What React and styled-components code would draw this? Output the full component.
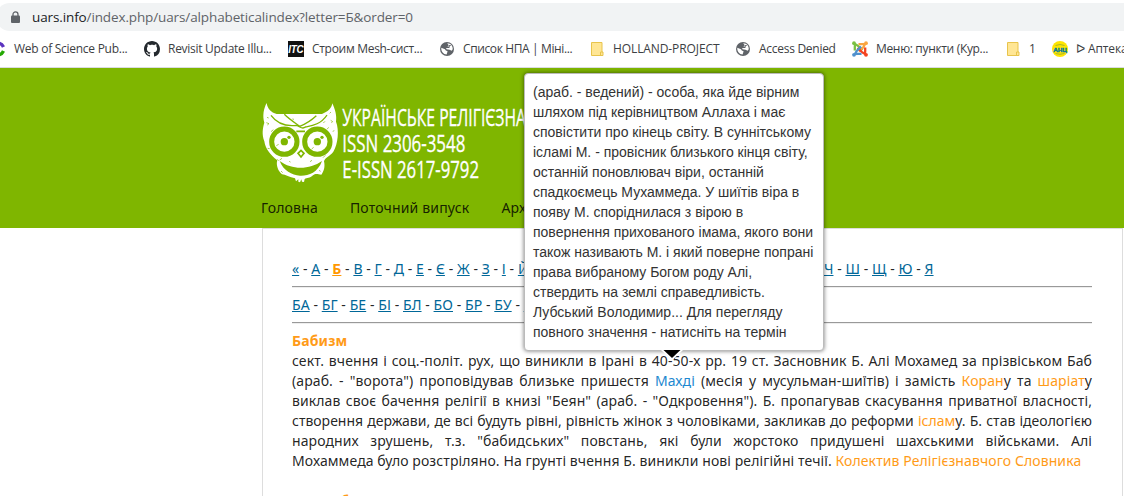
import React from "react";
import styled, { createGlobalStyle } from "styled-components";

const GlobalStyle = createGlobalStyle`
  * { box-sizing: border-box; }
  body {
    margin: 0;
    background: #fff;
    font-family: "Noto Sans", "Open Sans", sans-serif;
    font-size: 14px;
    line-height: 20px;
    color: rgba(0, 0, 0, 0.87);
  }
`;

const Page = styled.div`
  width: 1124px;
  height: 496px;
  overflow: hidden;
`;

const Browser = styled.div`
  height: 68px;
  padding-top: 3px;
  background: #fff;
  border-bottom: 1px solid #dadce0;
`;

const AddressBar = styled.div`
  display: flex;
  align-items: center;
  gap: 12px;
  height: 28px;
  margin: 0 -20px 0 -4px;
  padding-left: 15px;
  border-radius: 14px;
  background: #f1f3f4;
`;

const Url = styled.span`
  font: 13.5px/28px "Open Sans", sans-serif;
  letter-spacing: -0.12px;
  color: #5f6368;
  white-space: nowrap;
  b { font-weight: 400; color: #202124; }
`;

const Bookmarks = styled.div`
  display: flex;
  height: 36px;
  align-items: center;
  margin-left: -10px;
  width: 1300px;
`;

const Bookmark = styled.div`
  display: flex;
  flex: none;
  align-items: center;
  gap: 8px;
  width: ${(p) => p.$width}px;
  font: 12px/16px "Open Sans", sans-serif;
  letter-spacing: ${(p) => p.$track || 0}px;
  color: #3c4043;
  white-space: nowrap;
  svg { flex: none; }
`;

const Header = styled.header`
  height: 160px;
  padding: 27px 0 0 255px;
  background: #7fb600;
`;

const Logo = styled.svg`
  display: block;
`;

const Nav = styled.nav`
  display: flex;
  gap: 32px;
  margin: 8px 0 0 6px;
  letter-spacing: 0.17px;
`;

const NavItem = styled.a`
  color: rgba(0, 0, 0, 0.84);
  white-space: nowrap;
`;

const Content = styled.main`
  width: 861px;
  height: 300px;
  margin-left: 262px;
  padding: 30px 30px 0 29px;
  border: 1px solid #ddd;
  border-bottom: 0;
`;

const Letters = styled.div`
  white-space: nowrap;
  letter-spacing: ${(p) => p.$track}px;
`;

const Letter = styled.a`
  color: ${(p) => (p.$active ? "#ff9800" : "#006798")};
  font-weight: ${(p) => (p.$active ? 700 : 400)};
  text-decoration: underline;
`;

const Rule = styled.hr`
  height: 2px;
  margin: 7px 0;
  border: 0;
  border-top: 1px solid #999;
  border-bottom: 1px solid #eee;
`;

const TermTitle = styled.h2`
  margin: 0;
  font-size: 14px;
  line-height: 20px;
  font-weight: 700;
  letter-spacing: 0.15px;
  color: #ff9b18;
`;

const Article = styled.div`
  margin: 0 0 20px;
`;

const Line = styled.div`
  height: 20px;
  text-align: justify;
  text-align-last: ${(p) => (p.$last ? "left" : "justify")};
  letter-spacing: ${(p) => (p.$tight ? 0 : 0.095)}px;
`;

const Term = styled.a`
  color: ${(p) => (p.$hovered ? "#1e88d0" : "#ff9b18")};
`;

const Tooltip = styled.div`
  position: absolute;
  left: 524px;
  top: 73px;
  width: 300px;
  padding: 8px;
  border: 1px solid #bbb;
  border-radius: 4px;
  background: #fff;
  box-shadow: 0 0 4px rgba(0, 0, 0, 0.55);
  font: 14px/20px "Liberation Sans", Arial, sans-serif;
  color: #333;
  white-space: nowrap;
`;

const Arrow = styled.svg`
  position: absolute;
  left: 136px;
  top: 275px;
`;

const Lock = () => (
  <svg width="9" height="13" viewBox="0 0 9 13">
    <path d="M2 5V3.4a2.5 2.5 0 0 1 5 0V5" fill="none" stroke="#5f6368" strokeWidth="1.3" />
    <rect y="4.5" width="9" height="7.5" rx="1" fill="#5f6368" />
  </svg>
);

const Clarivate = () => (
  <svg width="16" height="16" viewBox="0 0 16 16" fill="none" strokeWidth="3.4">
    <path d="M3 5C6 1 11 1 13.500 6" stroke="#5b33bf" />
    <path d="M3 11C6 15 11 15 13.500 10" stroke="#24a803" />
  </svg>
);

const Github = () => (
  <svg width="16" height="16" viewBox="0 0 16 16" fill="#24292e">
    <path d="M8 0C3.580 0 0 3.580 0 8c0 3.540 2.290 6.530 5.470 7.590.4.070.55-.17.55-.38 0-.19-.01-.82-.01-1.490-2.010.37-2.530-.49-2.690-.94-.09-.23-.48-.94-.82-1.130-.28-.15-.68-.52-.01-.53.63-.01 1.080.58 1.230.82.72 1.210 1.870.87 2.330.66.07-.52.28-.87.51-1.070-1.780-.2-3.640-.89-3.640-3.950 0-.87.31-1.590.82-2.150-.08-.2-.36-1.020.08-2.120 0 0 .67-.21 2.200.82.64-.18 1.320-.27 2-.27s1.360.09 2 .27c1.530-1.040 2.200-.82 2.200-.82.44 1.100.16 1.920.08 2.120.51.56.82 1.270.82 2.150 0 3.070-1.870 3.750-3.650 3.950.29.25.54.73.54 1.480 0 1.070-.01 1.930-.01 2.200 0 .21.15.46.55.38A8.010 8.010 0 0 0 16 8c0-4.420-3.580-8-8-8z" />
  </svg>
);

const Itc = () => (
  <svg width="16" height="16" viewBox="0 0 16 16">
    <rect width="16" height="16" fill="#111" />
    <text x="0.300" y="12" fontFamily="Liberation Sans, sans-serif" fontSize="11" fontWeight="700" fontStyle="italic" textLength="15" lengthAdjust="spacingAndGlyphs" fill="#fff">ITC</text>
  </svg>
);

const Globe = () => (
  <svg width="16" height="16" viewBox="0 0 16 16">
    <circle cx="8" cy="8" r="7" fill="#5f6368" />
    <path d="M2.300 6.800L6 8.200 6.800 9.600 8.600 10.300 7.600 13.600C4.500 13.300 2 10.800 2.300 6.800ZM8.200 2.200C11.500 2 14 5 13.700 8.200L12.700 9.700 10.500 8.700 7.500 8.200 6.900 6.200 9.500 5.600 9.400 3.800Z" fill="#fff" />
    <path d="M7 6.500h3.200v-2h1.500" stroke="#5f6368" strokeWidth="1" fill="none" />
  </svg>
);

const Folder = () => (
  <svg width="16" height="16" viewBox="0 0 16 16">
    <path d="M2.500 1.500h10.500v9.500h1v3.500h-11.500z" fill="#ffe694" stroke="#e8c44c" />
    <path d="M11.500 14V11h2" fill="none" stroke="#e8c44c" />
  </svg>
);

const Joomla = () => (
  <svg width="16" height="16" viewBox="0 0 16 16" fill="none" strokeWidth="2.300">
    <path d="M2.800 9.500V6L3 3 6 4.800 10.500 9" stroke="#7ac143" />
    <path d="M6.500 3.200H10L13 3 11.500 6 7 10.500" stroke="#f9a541" />
    <path d="M13.200 6.500V10L13 13 10 11.200 5.500 7" stroke="#f44321" />
    <path d="M9.500 12.800H6L3 13 4.700 10 9 5.500" stroke="#5091cd" />
    <g stroke="none">
      <circle cx="2" cy="2.200" r="1.900" fill="#7ac143" />
      <circle cx="14" cy="2.200" r="1.900" fill="#f9a541" />
      <circle cx="14" cy="13.800" r="1.900" fill="#f44321" />
      <circle cx="2" cy="13.800" r="1.900" fill="#5091cd" />
    </g>
  </svg>
);

const Pharmacy = () => (
  <svg width="16" height="16" viewBox="0 0 16 16">
    <circle cx="8" cy="8" r="8" fill="#ffe500" />
    <path d="M3.500 4.500Q8 2.500 12.500 4.500M3.500 12.500Q8 14 12.500 12.500" stroke="#a6b72b" fill="none" />
    <text x="1.200" y="10.500" fontFamily="Liberation Sans, sans-serif" fontSize="6" fontWeight="700" textLength="13.500" lengthAdjust="spacingAndGlyphs" fill="#007c9d" stroke="#007c9d" strokeWidth="0.400">АНЦ</text>
  </svg>
);

const SiteLogo = () => (
  <Logo width="420" height="95" viewBox="0 0 1260 285">
    <path fill="#fff" d="M35 24C37 40 48 53 65 57H201C218 51 230 40 232 25C240 42 246 62 243 80C253 105 249 147 235 170C224 185 209 188 207 199C211 216 206 230 199 239C187 237 181 235 174 241C164 250 156 249 149 252L147 261 141 260 139 253 135 262 130 260 130 253 123 259 120 250C104 247 91 239 81 238C70 230 62 210 67 196C45 179 32 163 28 139C20 118 23 99 28 83C22 63 26 40 35 24Z" />
    <g fill="none" stroke="#7fb600">
      <circle cx="88" cy="140" r="38" strokeWidth="15" />
      <circle cx="187" cy="140" r="38" strokeWidth="15" />
      <path d="M48 61C70 91 98 94 124 91C136 94 141 105 151 96C171 92 198 88 216 60" strokeWidth="4" />
      <path d="M88 58C103 73 119 83 134 94C151 87 169 76 184 62" strokeWidth="4" />
      <path d="M124 109H150M129 175L138 186 147 175 138 166Z" strokeWidth="5" />
    </g>
    <g fill="#7fb600">
      <path d="M74 198C112 226 164 224 201 198C188 234 159 243 135 242C110 240 86 228 74 198Z" />
      <circle cx="88" cy="140" r="11" />
      <circle cx="187" cy="140" r="11" />
      <circle cx="102" cy="127" r="5" />
      <circle cx="201" cy="127" r="5" />
    </g>
    <path d="M34 83l8 3-5 4M227 76l6 4-4 3M55 104l-7 6M216 103l5-6M81 190l-7 5M211 181l-7 7M103 198l3 4M165 200l6-4M238 107l-5 2M36 67l5 2M224 55l4-4M38 160l6 1M67 193l4 4M192 226l5 3M78 228l5 5M64 152l7-4M170 162l6-5M205 84l5-5M112 72l5 1" fill="none" stroke="#7fb600" strokeWidth="2" />
    <g fill="#fff" stroke="#fff" strokeWidth="1" fontFamily="Open Sans, sans-serif" fontSize="70" fontWeight="400">
      <text x="262" y="92" textLength="704" lengthAdjust="spacingAndGlyphs">УКРАЇНСЬКЕ РЕЛІГІЄЗНАВСТВО</text>
      <text x="262" y="170" textLength="369" lengthAdjust="spacingAndGlyphs">ISSN 2306-3548</text>
      <text x="262" y="248" textLength="410" lengthAdjust="spacingAndGlyphs">E-ISSN 2617-9792</text>
    </g>
  </Logo>
);

const bookmarks = [
  { icon: Clarivate, label: "Web of Science Pub...", width: 154, track: -0.27 },
  { icon: Github, label: "Revisit Update Illu...", width: 144, track: -0.28 },
  { icon: Itc, label: "Строим Mesh-сист...", width: 151, track: -0.3 },
  { icon: Globe, label: "Список НПА | Міні...", width: 150, track: -0.38 },
  { icon: Folder, label: "HOLLAND-PROJECT", width: 146, track: -0.1 },
  { icon: Globe, label: "Access Denied", width: 117, track: -0.28 },
  { icon: Joomla, label: "Меню: пункти (Кур...", width: 153, track: -0.33 },
  { icon: Folder, label: "1", width: 47 },
  { icon: Pharmacy, label: "ᐅ Аптека", width: 140, track: -0.1 },
];

const alphabet = "« А Б В Г Д Е Є Ж З І Й К Л М Н О П Р С Т У Ф Х Ц Ч Ш Щ Ю Я".split(" ");
const syllables = "БА БГ БЕ БІ БЛ БО БР БУ БЮ".split(" ");

const tooltipLines = [
  "(араб. - ведений) - особа, яка йде вірним",
  "шляхом під керівництвом Аллаха і має",
  "сповістити про кінець світу. В суннітському",
  "ісламі М. - провісник близького кінця світу,",
  "останній поновлювач віри, останній",
  "спадкоємець Мухаммеда. У шиїтів віра в",
  "появу М. споріднилася з вірою в",
  "повернення прихованого імама, якого вони",
  "також називають М. і який поверне попрані",
  "права вибраному Богом роду Алі,",
  "ствердить на землі справедливість.",
  "Лубський Володимир... Для перегляду",
  "повного значення - натисніть на термін",
];

const LetterRow = ({ items, active, track }) => (
  <Letters $track={track}>
    {items.map((item, i) => (
      <React.Fragment key={item}>
        {i > 0 && " - "}
        <Letter $active={item === active}>{item}</Letter>
      </React.Fragment>
    ))}
  </Letters>
);

export default function App() {
  return (
    <Page>
      <GlobalStyle />
      <Browser>
        <AddressBar>
          <Lock />
          <Url><b>uars.info</b>/index.php/uars/alphabeticalindex?letter=Б&amp;order=0</Url>
        </AddressBar>
        <Bookmarks>
          {bookmarks.map(({ icon: Icon, label, width, track }) => (
            <Bookmark key={label} $width={width} $track={track}>
              <Icon />
              <span>{label}</span>
            </Bookmark>
          ))}
        </Bookmarks>
      </Browser>
      <Header>
        <SiteLogo />
        <Nav>
          <NavItem>Головна</NavItem>
          <NavItem>Поточний випуск</NavItem>
          <NavItem>Архіви</NavItem>
        </Nav>
      </Header>
      <Content>
        <LetterRow items={alphabet} active="Б" track={0.07} />
        <Rule />
        <LetterRow items={syllables} track={0.08} />
        <Rule />
        <TermTitle>Бабизм</TermTitle>
        <Article>
          <Line>сект. вчення і соц.-політ. рух, що виникли в Ірані в 40-50-х рр. 19 ст. Засновник Б. Алі Мохамед за прізвіськом Баб</Line>
          <Line>
            (араб. - "ворота") проповідував близьке пришестя <Term $hovered>Махді</Term> (месія у мусульман-шиїтів) і
            замість <Term>Коран</Term>у та <Term>шаріат</Term>у
          </Line>
          <Line>виклав своє бачення релігії в книзі "Беян" (араб. - "Одкровення"). Б. пропагував скасування приватної власності,</Line>
          <Line $tight>
            створення держави, де всі будуть рівні, рівність жінок з чоловіками, закликав до реформи <Term>іслам</Term>у.
            Б. став ідеологією
          </Line>
          <Line>народних зрушень, т.з. "бабидських" повстань, які були жорстоко придушені шахськими військами. Алі</Line>
          <Line $last>
            Мохаммеда було розстріляно. На грунті вчення Б. виникли нові релігійні течії. <Term>Колектив Релігієзнавчого Словника</Term>
          </Line>
        </Article>
        <TermTitle>Багатобожжя</TermTitle>
      </Content>
      <Tooltip>
        {tooltipLines.map((line) => (
          <div key={line}>{line}</div>
        ))}
        <Arrow width="22" height="12" viewBox="0 0 22 12">
          <path d="M0 1L11 11.500 22 1Z" fill="#fff" />
          <path d="M2.500 1L11 9 19.500 1Z" fill="#000" />
        </Arrow>
      </Tooltip>
    </Page>
  );
}
